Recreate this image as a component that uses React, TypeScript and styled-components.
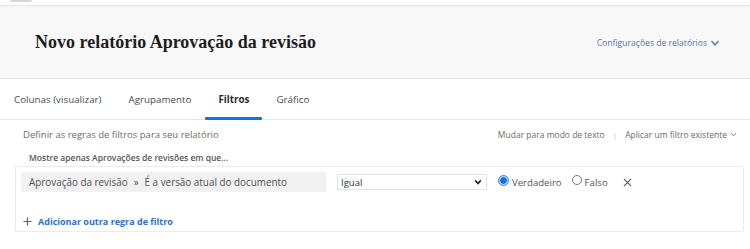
import React from "react"
import styled, { createGlobalStyle } from "styled-components"

const GlobalStyle = createGlobalStyle`
  html, body { margin: 0; padding: 0; background: #fff; }
  body { font-family: "Open Sans", "Liberation Sans", sans-serif; color: #2c2c2c; }
`

const Page = styled.div`
  width: 750px;
  height: 249px;
  overflow: hidden;
  background: #fff;
`

const TopStrip = styled.div`
  height: 5px;
  border-bottom: 1px solid #e4e4e4;
  padding-left: 10px;
`

const TopTab = styled.div`
  width: 22px;
  height: 2px;
  background: #d6d6d6;
  border-radius: 0 0 2px 2px;
`

const Header = styled.header`
  height: 73px;
  background: #f8f8f8;
  border-bottom: 1px solid #e8e8e8;
  display: flex;
  align-items: center;
  justify-content: space-between;
  padding: 1px 30px 0 35px;
  box-sizing: border-box;
`

const Title = styled.h1`
  margin: 0;
  font-family: "Liberation Serif", "Times New Roman", serif;
  font-size: 18px;
  font-weight: bold;
  color: #1e1e1e;
`

const SettingsLink = styled.a`
  font-size: 8.6px;
  color: #4b75c8;
  display: flex;
  align-items: center;
  gap: 3px;
`

const Tabs = styled.nav`
  height: 40px;
  border-bottom: 1px solid #e6e6e6;
  display: flex;
  padding-left: 14px;
  gap: 27px;
`

const Tab = styled.div<{ $active?: boolean }>`
  position: relative;
  display: flex;
  align-items: center;
  font-size: 9.8px;
  font-weight: ${(p) => (p.$active ? 700 : 400)};
  color: ${(p) => (p.$active ? "#2c2c2c" : "#4b4b4b")};
  padding: 0 ${(p) => (p.$active ? "13px" : "0")};
  margin: 0 ${(p) => (p.$active ? "-13px" : "0")};
  &::after {
    content: "";
    display: ${(p) => (p.$active ? "block" : "none")};
    position: absolute;
    left: 0;
    right: 0;
    bottom: -1px;
    height: 3px;
    background: #1473e6;
    border-radius: 1px;
  }
`

const Content = styled.section`
  padding: 5px 6px 0 15px;
`

const IntroRow = styled.div`
  display: flex;
  justify-content: space-between;
  align-items: center;
  height: 18px;
  padding-left: 8px;
`

const Intro = styled.span`
  font-size: 9.5px;
  color: #6b6b6b;
`

const Actions = styled.div`
  display: flex;
  align-items: center;
  gap: 8px;
  margin-right: 7px;
  font-size: 8.5px;
  color: #6b6b6b;
`

const Divider = styled.span`
  color: #c4c4c4;
  font-size: 8px;
`

const ActionMenu = styled.span`
  display: flex;
  align-items: center;
  gap: 3px;
`

const Caption = styled.div`
  font-size: 8.5px;
  font-weight: 600;
  color: #555;
  padding: 9px 0 0 14px;
  height: 23px;
  box-sizing: border-box;
`

const RuleBox = styled.div`
  border: 1px solid #ebebeb;
  border-radius: 2px;
  padding: 5px 6px 3px 5px;
  height: 66px;
  box-sizing: border-box;
  display: flex;
  flex-direction: column;
  justify-content: space-between;
`

const RuleRow = styled.div`
  display: flex;
  align-items: center;
`

const FieldPath = styled.div`
  width: 305px;
  height: 20px;
  background: #f1f1f1;
  display: flex;
  align-items: center;
  padding-left: 8px;
  box-sizing: border-box;
  font-size: 9.9px;
  color: #505050;
  gap: 6px;
`

const Select = styled.div`
  margin-left: 11px;
  width: 150px;
  height: 16px;
  border: 1px solid #e2e2e2;
  box-sizing: border-box;
  display: flex;
  align-items: center;
  justify-content: space-between;
  padding: 0 4px 0 3px;
  font-size: 9.5px;
  color: #333;
`

const RadioGroup = styled.div`
  display: flex;
  align-items: center;
  margin-left: 11px;
  font-size: 9.6px;
  color: #555;
`

const Radio = styled.span<{ $checked?: boolean }>`
  width: ${(p) => (p.$checked ? "11px" : "10px")};
  height: ${(p) => (p.$checked ? "11px" : "10px")};
  border-radius: 50%;
  box-sizing: border-box;
  border: 1px solid ${(p) => (p.$checked ? "#2680eb" : "#777")};
  background: ${(p) => (p.$checked ? "radial-gradient(circle, #1a6fe0 0 3px, #bcd6f7 3.5px)" : "#fff")};
  margin-right: 3px;
  transform: translateY(-2px);
`

const RadioLabel = styled.label`
  display: flex;
  align-items: center;
  margin-right: 10px;
`

const RemoveButton = styled.span`
  margin-left: 5px;
  display: flex;
  align-items: center;
`

const AddLink = styled.a`
  display: flex;
  align-items: center;
  gap: 6px;
  padding-left: 2px;
  font-size: 9px;
  font-weight: 700;
  color: #2f6fd0;
`

const Chevron = ({ size = 8, color = "#4b75c8" }: { size?: number; color?: string }) => (
  <svg width={size} height={size} viewBox="0 0 10 10">
    <path d="M1.5 3 L5 7 L8.5 3" fill="none" stroke={color} strokeWidth="1.3" />
  </svg>
)

const App: React.FC = () => {
  return (
    <Page>
      <GlobalStyle />
      <TopStrip>
        <TopTab />
      </TopStrip>
      <Header>
        <Title>Novo relatório Aprovação da revisão</Title>
        <SettingsLink>
          Configurações de relatórios <Chevron size={10} />
        </SettingsLink>
      </Header>
      <Tabs>
        <Tab>Colunas (visualizar)</Tab>
        <Tab>Agrupamento</Tab>
        <Tab $active>Filtros</Tab>
        <Tab>Gráfico</Tab>
      </Tabs>
      <Content>
        <IntroRow>
          <Intro>Definir as regras de filtros para seu relatório</Intro>
          <Actions>
            <span>Mudar para modo de texto</span>
            <Divider>|</Divider>
            <ActionMenu>
              Aplicar um filtro existente <Chevron size={7} color="#777" />
            </ActionMenu>
          </Actions>
        </IntroRow>
        <Caption>Mostre apenas Aprovações de revisões em que...</Caption>
        <RuleBox>
          <RuleRow>
            <FieldPath>
              <span>Aprovação da revisão</span>
              <span>»</span>
              <span>É a versão atual do documento</span>
            </FieldPath>
            <Select>
              <span>Igual</span>
              <svg width="8" height="8" viewBox="0 0 10 10">
                <path d="M1.5 3 L5 7 L8.5 3" fill="none" stroke="#222" strokeWidth="2" />
              </svg>
            </Select>
            <RadioGroup>
              <RadioLabel>
                <Radio $checked />
                Verdadeiro
              </RadioLabel>
              <RadioLabel>
                <Radio />
                Falso
              </RadioLabel>
              <RemoveButton>
                <svg width="9" height="9" viewBox="0 0 10 10">
                  <path d="M1 1 L9 9 M9 1 L1 9" stroke="#555" strokeWidth="1.2" />
                </svg>
              </RemoveButton>
            </RadioGroup>
          </RuleRow>
          <AddLink>
            <svg width="9" height="9" viewBox="0 0 10 10">
              <path d="M5 0.5 V9.5 M0.5 5 H9.5" stroke="#2f6fd0" strokeWidth="1.3" />
            </svg>
            Adicionar outra regra de filtro
          </AddLink>
        </RuleBox>
      </Content>
    </Page>
  )
}

export default App
